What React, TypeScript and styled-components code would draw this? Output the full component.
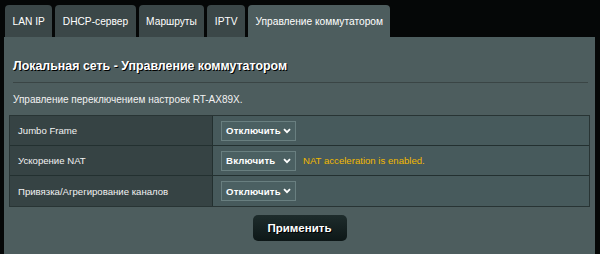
import React from "react";
import styled, { createGlobalStyle } from "styled-components";

const Global = createGlobalStyle`
  html, body { margin: 0; padding: 0; background: #000; }
  body { font-family: "Liberation Sans", Arial, sans-serif; width: 600px; height: 254px; overflow: hidden; }
`;

const Page = styled.div`
  width: 600px;
  height: 254px;
  background: #050707;
  padding: 5px 5px 0 4px;
  box-sizing: border-box;
  display: flex;
  flex-direction: column;
`;

const Tabs = styled.div`
  display: flex;
  gap: 3px;
  padding-left: 1px;
  height: 32px;
`;

const Tab = styled.div<{ $active?: boolean }>`
  display: flex;
  align-items: center;
  padding: 0 7.5px;
  font-family: "Liberation Sans", Arial, sans-serif;
  font-size: 10.2px;
  color: #fff;
  border-radius: 4px 4px 0 0;
  background: ${(p) => (p.$active ? "#4d5d5e" : "#3b4748")};
`;

const Panel = styled.div`
  flex: 1;
  background: #4d5d5e;
  padding: 22px 5px 0 5px;
  display: flex;
  flex-direction: column;
`;

const Title = styled.div`
  font-weight: bold;
  font-size: 12.4px;
  line-height: 14px;
  color: #fff;
  text-shadow: 1px 1px 0 #000;
  padding-bottom: 9px;
  margin: 0 2px 0 4px;
  border-bottom: 1px solid #3a4545;
`;

const Desc = styled.div`
  font-size: 10px;
  line-height: 12px;
  color: #f2f2f2;
  margin: 11px 0 0 4px;
`;

const Table = styled.div`
  display: grid;
  grid-template-columns: 203px 1fr;
  grid-auto-rows: 30px;
  margin-top: 9px;
  border: 1px solid #283434;
`;

const Label = styled.div`
  background: #364344;
  color: #f2f2f2;
  font-size: 9.6px;
  display: flex;
  align-items: center;
  padding-left: 8px;
  border-bottom: 1px solid #233030;
  border-right: 1px solid #233030;
  &:nth-last-child(2) { border-bottom: none; }
`;

const Cell = styled.div`
  background: #475a5c;
  display: flex;
  align-items: center;
  padding-left: 8px;
  gap: 7px;
  border-bottom: 1px solid #233030;
  &:last-child { border-bottom: none; }
`;

const Select = styled.div`
  width: 75px;
  height: 20px;
  box-sizing: border-box;
  border: 1px solid #697f80;
  background: #4b6062;
  color: #fff;
  font-size: 9.6px;
  font-weight: bold;
  letter-spacing: 0.2px;
  display: flex;
  align-items: center;
  justify-content: space-between;
  padding: 0 4px 0 4px;
`;

const Note = styled.span`
  color: #f2b900;
  font-size: 9.6px;
`;

const Footer = styled.div`
  display: flex;
  justify-content: center;
  padding-top: 8px;
`;

const Button = styled.button`
  width: 94px;
  height: 26px;
  border-radius: 5px;
  border: none;
  background: linear-gradient(#1e2c2c, #0d1717);
  color: #fff;
  font-family: "Liberation Sans", Arial, sans-serif;
  font-weight: bold;
  font-size: 11.5px;
  text-shadow: 1px 1px 0 #000;
  padding: 0;
`;

const Chevron = () => (
  <svg width="8" height="6" viewBox="0 0 8 6">
    <path d="M1 1.2 L4 4.2 L7 1.2" stroke="#fff" strokeWidth="1.8" fill="none" />
  </svg>
);

export default function App() {
  const rows = [
    { label: "Jumbo Frame", value: "Отключить" },
    { label: "Ускорение NAT", value: "Включить", note: "NAT acceleration is enabled." },
    { label: "Привязка/Агрегирование каналов", value: "Отключить" },
  ];
  return (
    <>
      <Global />
      <Page>
        <Tabs>
          <Tab>LAN IP</Tab>
          <Tab>DHCP-сервер</Tab>
          <Tab>Маршруты</Tab>
          <Tab>IPTV</Tab>
          <Tab $active>Управление коммутатором</Tab>
        </Tabs>
        <Panel>
          <Title>Локальная сеть - Управление коммутатором</Title>
          <Desc>Управление переключением настроек RT-AX89X.</Desc>
          <Table>
            {rows.map((r) => (
              <React.Fragment key={r.label}>
                <Label>{r.label}</Label>
                <Cell>
                  <Select>
                    <span>{r.value}</span>
                    <Chevron />
                  </Select>
                  {r.note && <Note>{r.note}</Note>}
                </Cell>
              </React.Fragment>
            ))}
          </Table>
          <Footer>
            <Button>Применить</Button>
          </Footer>
        </Panel>
      </Page>
    </>
  );
}
